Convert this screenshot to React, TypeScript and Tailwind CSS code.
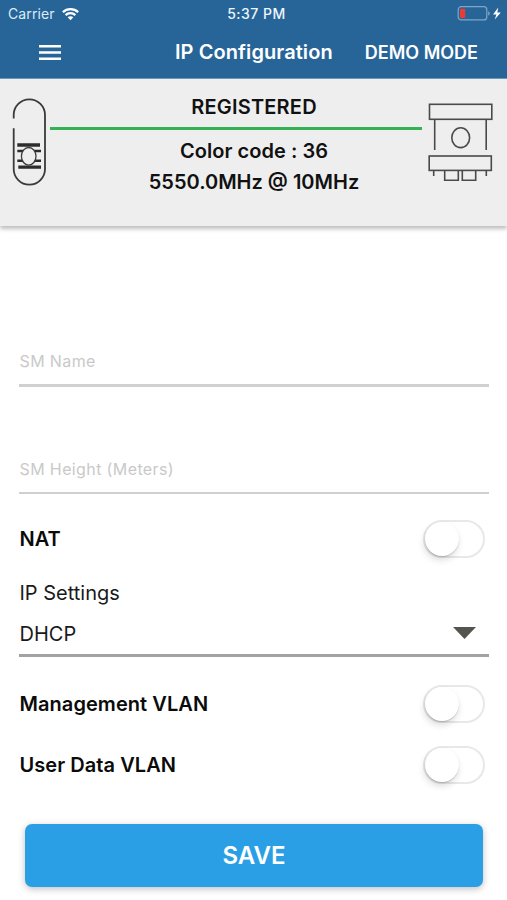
import { useState } from 'react';

interface FieldProps {
    label: string;
    className: string;
}

interface ToggleRowProps {
    label: string;
    className: string;
}

function StatusBar() {
    return (
        <div className="flex h-[27px] items-center justify-between pt-px pl-[8px] pr-[5px] text-[14px] leading-none">
            <div className="flex w-[120px] items-center gap-[7px]">
                <span className="tracking-[0.1px] text-[#dcebf7]">Carrier</span>
                <svg className="h-[13px] w-[17px]" viewBox="0 0 17 13" fill="#fff">
                    <path d="M8.5 0C5.3 0 2.3 1.2.1 3.3l1.5 1.6a10 10 0 0 1 13.8 0l1.5-1.6A12.3 12.3 0 0 0 8.5 0z" />
                    <path d="M8.5 4.1c-2.1 0-4.1.8-5.6 2.2l1.5 1.6a6 6 0 0 1 8.2 0l1.5-1.6a8.2 8.2 0 0 0-5.6-2.2z" />
                    <path d="M8.5 8.2c-1.1 0-2.1.4-2.8 1.1l2.8 3 2.8-3a4.1 4.1 0 0 0-2.8-1.1z" />
                </svg>
            </div>
            <span className="ml-[3px] text-[14px] font-medium tracking-[0.5px] text-[#eef6fd]">5:37 PM</span>
            <div className="flex w-[120px] items-center justify-end">
                <svg className="mb-[2px] h-[15px] w-[45px]" viewBox="0 0 45 15">
                    <rect x="1.2" y=".7" width="28.6" height="13.2" rx="3" fill="none" stroke="#7fa6c6" strokeWidth="1.2" />
                    <rect x="3" y="2.7" width="5.2" height="9.4" rx="1" fill="#ec3b35" />
                    <path d="M31.2 5.3v4.4c1-.3 1.6-1.2 1.6-2.2s-.6-1.9-1.6-2.2z" fill="#7fa6c6" />
                    <path d="M41.3 1.6l-5.3 6.8h3.4l-1.6 5.2 6-7h-3.5z" fill="#fff" />
                </svg>
            </div>
        </div>
    );
}

function NavBar() {
    return (
        <div className="flex h-[50px] items-center pl-[39px] pr-[29px]">
            <button title="Menu">
                <svg className="h-[15px] w-[22px]" viewBox="0 0 22 15" stroke="#fff" strokeWidth="2.4">
                    <path d="M0 1.3h22M0 7.5h22M0 13.7h22" />
                </svg>
            </button>
            <h1 className="ml-[114px] text-[20px] font-semibold tracking-[0.08px] whitespace-nowrap">IP Configuration</h1>
            <span className="ml-auto text-[18px] font-semibold whitespace-nowrap">DEMO MODE</span>
        </div>
    );
}

function SubscriberIcon() {
    return (
        <svg className="h-[92px] w-[36px]" viewBox="0 0 36 92" fill="none" stroke="#3a3a3a">
            <path d="M3.7 22.5V19a15.65 15.65 0 0 1 31.3 0V73a15.65 15.65 0 0 1-31.3 0V32.3" strokeWidth="1.8" />
            <path d="M7.3 49H30M8.3 71.2H31" stroke="#2c2c2c" strokeWidth="3.3" />
            <path d="M7.3 55H31M7.3 64.7H31" stroke="#2c2c2c" strokeWidth="2.6" />
            <ellipse cx="18.7" cy="60.3" rx="7.3" ry="8.8" fill="#eee" strokeWidth="1.3" />
        </svg>
    );
}

function AccessPointIcon() {
    return (
        <svg className="h-[82px] w-[66px]" viewBox="0 0 66 82" fill="none" stroke="#4a4a4a" strokeWidth="1.6">
            <rect x="1.5" y="3.3" width="62.3" height="15" />
            <path d="M6.7 18.3V49M58.2 18.3V49" />
            <ellipse cx="32.7" cy="36.7" rx="8.9" ry="9.9" />
            <rect x="1.2" y="55" width="62.1" height="14.4" />
            <path d="M5.7 69.4v5.6M58.3 69.4v5.6" />
            <path d="M16.7 69.4v9.9h13.6v-9.9M34.3 69.4v9.9h13.4v-9.9" />
        </svg>
    );
}

function LinkPanel() {
    return (
        <section className="flex h-[147px] items-start bg-[#eee] pl-[10px] pr-[13px] shadow-[0_3px_4px_rgba(0,0,0,0.25)]">
            <div className="mt-[17px] w-[40px]">
                <SubscriberIcon />
            </div>
            <div className="flex flex-1 flex-col text-[20px] font-semibold text-[#111]">
                <div className="h-[48px] pt-[13px] pl-[36px] text-center leading-[31px] tracking-[0.2px]">REGISTERED</div>
                <div className="h-[2.5px] bg-[#34b253]" />
                <div className="mt-[6px] pl-[36px] text-center leading-[31px] tracking-[0.05px]">Color code : 36</div>
                <div className="pl-[36px] text-center leading-[31px]">5550.0MHz @ 10MHz</div>
            </div>
            <div className="mt-[22px] ml-[6px] w-[66px]">
                <AccessPointIcon />
            </div>
        </section>
    );
}

function Field({ label, className }: FieldProps) {
    const [value, setValue] = useState('');

    return (
        <input
            className={`${className} h-[40px] w-full border-[#d0d0d0] pb-[9px] pl-[0.5px] text-[16px] tracking-[0.38px] text-[#111] outline-none placeholder:text-[#c9c9c9]`}
            placeholder={label}
            value={value}
            onChange={(e) => setValue(e.target.value)}
        />
    );
}

function ToggleRow({ label, className }: ToggleRowProps) {
    const [on, setOn] = useState(false);

    return (
        <div className={`${className} flex h-[38px] items-center justify-between pl-[0.5px] pr-[4px]`}>
            <span className="text-[20px] font-semibold tracking-[0.06px] text-[#0b0b0b]">{label}</span>
            <button
                role="switch"
                aria-checked={on}
                onClick={() => setOn(!on)}
                className={`${on ? 'justify-end bg-[#2b9fe6]' : 'justify-start bg-white'} flex h-[38px] w-[62px] rounded-full border-2 border-[#e8e8e8]`}
            >
                <span className="h-[34px] w-[34px] rounded-full bg-white shadow-[-1px_4px_7px_rgba(0,0,0,0.14),0_1px_1px_rgba(0,0,0,0.16)]" />
            </button>
        </div>
    );
}

export default function App() {
    return (
        <div className="flex h-[900px] w-full flex-col overflow-hidden bg-white font-['Inter',sans-serif]">
            <header className="h-[79px] border-b border-[#6f9abd] bg-[#276598] text-white">
                <StatusBar />
                <NavBar />
            </header>
            <LinkPanel />

            <main className="flex flex-1 flex-col pl-[19px] pr-[18px]">
                <Field label="SM Name" className="mt-[121px] border-b-[3px]" />
                <Field label="SM Height (Meters)" className="mt-[67px] border-b-2" />

                <ToggleRow label="NAT" className="mt-[26px]" />

                {/* IP settings dropdown */}
                <div className="mt-[15px] flex flex-col text-[20px] text-[#1a1a1a]">
                    <span className="pl-[0.5px] leading-[40px]">IP Settings</span>
                    <div className="flex h-[44px] items-center justify-between border-b-[3px] border-[#a3a3a3] pr-[13px] pl-[0.5px]">
                        <span>DHCP</span>
                        <svg className="mb-[2px] h-[12px] w-[23px]" viewBox="0 0 23 12" fill="#55554f">
                            <path d="M0 0h23L11.5 12z" />
                        </svg>
                    </div>
                </div>

                <ToggleRow label="Management VLAN" className="mt-[28px]" />
                <ToggleRow label="User Data VLAN" className="mt-[23px]" />

                <button className="mt-[40px] mr-[6px] ml-[6px] h-[63px] rounded-[7px] bg-[#2b9fe6] text-[24px] font-semibold text-white shadow-[0_2px_7px_rgba(0,0,0,0.25)]">
                    SAVE
                </button>
            </main>
        </div>
    );
}
